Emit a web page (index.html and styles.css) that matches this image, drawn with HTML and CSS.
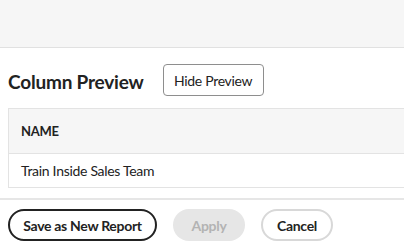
FILE: index.html
```html
<!DOCTYPE html>
<html lang="en">
  <head>
    <meta charset="UTF-8" />
    <meta name="viewport" content="width=device-width, initial-scale=1.0" />
    <title>Column Preview</title>
    <link rel="stylesheet" href="styles.css">
  </head>
  <body>
    <div class="top-bar"></div>
    <div class="preview">
      <div class="preview-head">
        <h2>Column Preview</h2>
        <button class="hide-btn">Hide Preview</button>
      </div>
      <table class="preview-table">
        <thead>
          <tr><th>NAME</th></tr>
        </thead>
        <tbody>
          <tr><td>Train Inside Sales Team</td></tr>
        </tbody>
      </table>
    </div>
    <div class="footer">
      <button class="btn btn-save">Save as New Report</button>
      <button class="btn btn-apply" disabled>Apply</button>
      <button class="btn btn-cancel">Cancel</button>
    </div>
  </body>
</html>
```

FILE: styles.css
```css
/* Global Styles */
* {
  box-sizing: border-box;
  margin: 0;
  padding: 0;
}
body {
  font-family: Lato, "Open Sans", sans-serif;
  background: #fff;
  color: #2c2c2c;
  overflow: hidden;
  letter-spacing: -0.3px;
}
.top-bar {
  height: 48px;
  background: #f6f6f6;
  border-bottom: 1px solid #e1e1e1;
}
/* Preview Section */
.preview {
  padding: 16px 0 0 8px;
  overflow: hidden;
}
.preview-head {
  display: flex;
  align-items: center;
  gap: 19px;
  height: 32px;
}
.preview-head h2 {
  font-size: 19px;
  font-weight: 700;
  letter-spacing: -0.2px;
  color: #222;
  padding-top: 2px;
}
.hide-btn {
  width: 101px;
  height: 32px;
  border: 1px solid #8e8e8e;
  border-radius: 4px;
  background: #fff;
  font-family: inherit;
  font-size: 14px;
  letter-spacing: -0.3px;
  color: #222;
}
.preview-table {
  width: calc(100% + 20px);
  margin-top: 12px;
  border-collapse: collapse;
  border: 1px solid #e3e3e3;
  text-align: left;
}
.preview-table th {
  height: 45px;
  padding: 0 12px;
  background: #f6f6f6;
  border-bottom: 1px solid #e3e3e3;
  font-size: 13px;
  font-weight: 700;
  color: #222;
}
.preview-table td {
  height: 34px;
  padding: 0 12px;
  font-size: 14px;
  color: #222;
}
/* Footer */
.footer {
  margin-top: 10px;
  border-top: 2px solid #e6e6e6;
  padding: 9px 8px 0;
  display: flex;
  gap: 16px;
}
.btn {
  height: 32px;
  border-radius: 16px;
  font-family: inherit;
  font-size: 14px;
  font-weight: 700;
  letter-spacing: -0.3px;
  background: #fff;
  color: #222;
}
.btn-save {
  width: 149px;
  border: 2px solid #222;
}
.btn-apply {
  width: 72px;
  border: none;
  background: #e6e6e6;
  color: #b3b3b3;
}
.btn-cancel {
  width: 72px;
  border: 2px solid #d8d8d8;
}
```
